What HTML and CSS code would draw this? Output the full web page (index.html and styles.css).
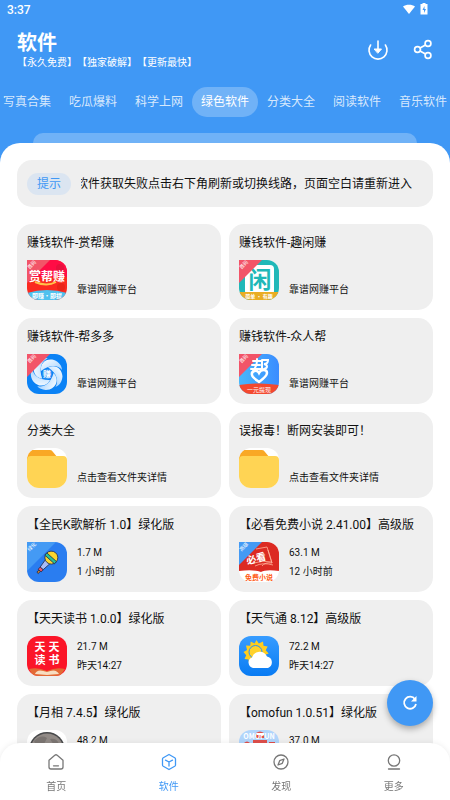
FILE: index.html
```html
<!DOCTYPE html>
<html lang="zh-CN">
<head>
    <meta charset="UTF-8">
    <meta name="viewport" content="width=device-width, initial-scale=1.0">
    <title>软件</title>
    <link rel="stylesheet" href="styles.css">
</head>
<body>
    <header class="header">
        <div class="status">
            <span>3:37</span>
            <svg class="status-icons" width="26" height="14" viewBox="0 0 26 14" fill="#fff">
                <path d="M1 3.500C4 1 10 1 13 3.500L7 11z"/>
                <path d="M18.500 1h2V0h3v1h2v10.500h-7z"/>
                <path d="M22.500 3l-2 4h1.500v3l2-4h-1.500z" fill="#4098f5"/>
            </svg>
        </div>
        <div class="title-row">
            <div>
                <h1 class="title">软件</h1>
                <p class="subtitle">【永久免费】【独家破解】【更新最快】</p>
            </div>
            <div class="actions">
                <button class="icon-button" aria-label="下载">
                    <svg width="24" height="24" viewBox="0 0 24 24" fill="none" stroke="#fff" stroke-width="1.600" stroke-linecap="round">
                        <path d="M4.600 7a9 9 0 1 0 14.800 0M12 3v8"/>
                        <path d="M8.500 11h7L12 15z" fill="#fff" stroke-width="1"/>
                    </svg>
                </button>
                <button class="icon-button" aria-label="分享">
                    <svg width="24" height="24" viewBox="0 0 24 24" fill="none" stroke="#fff" stroke-width="1.700">
                        <circle cx="6.500" cy="11.500" r="2.900"/>
                        <circle cx="17" cy="5.500" r="2.900"/>
                        <circle cx="17" cy="17.500" r="2.900"/>
                        <path d="M9 10l5.500-3.100M9 13l5.500 3.100"/>
                    </svg>
                </button>
            </div>
        </div>
        <nav class="tabs">
            <a class="tab" href="#">写真合集</a>
            <a class="tab" href="#">吃瓜爆料</a>
            <a class="tab" href="#">科学上网</a>
            <a class="tab active" href="#">绿色软件</a>
            <a class="tab" href="#">分类大全</a>
            <a class="tab" href="#">阅读软件</a>
            <a class="tab" href="#">音乐软件</a>
        </nav>
        <div class="peek"></div>
    </header>

    <main class="sheet">
        <div class="notice">
            <span class="notice-tag">提示</span>
            <div class="notice-window"><span class="notice-text">软件获取失败点击右下角刷新或切换线路，页面空白请重新进入</span></div>
        </div>

        <div class="grid">
            <article class="card">
                <h2 class="card-title">赚钱软件-赏帮赚</h2>
                <div class="card-body">
                    <svg class="app-icon ribboned" viewBox="0 0 40 40">
                        <rect width="40" height="40" fill="#fb2a20"/>
                        <rect width="40" height="17" fill="#ff0c45"/>
                        <circle cx="33" cy="8" r="4" fill="#e8103d"/>
                        <circle cx="34" cy="27" r="4" fill="#ea2519"/>
                        <path d="M8 22q12 5 21 0" fill="none" stroke="#ffc34a" stroke-width="2"/>
                        <path d="M0 0h23L0 23z" fill="#f25468"/>
                        <text class="art bold" x="20" y="21" font-size="12" fill="#fff">赏帮赚</text>
                        <path d="M0 33q20-6 40 0v7H0z" fill="#4fc1ee"/>
                        <text class="art bold" x="20" y="38" font-size="6" fill="#fff">即赚·即提</text>
                        <text class="art" x="6" y="6" font-size="5" fill="#fff" transform="rotate(-45 6 6)">首码</text>
                    </svg>
                    <div class="card-info"><p>靠谱网赚平台</p></div>
                </div>
            </article>

            <article class="card">
                <h2 class="card-title">赚钱软件-趣闲赚</h2>
                <div class="card-body">
                    <svg class="app-icon ribboned" viewBox="0 0 40 40">
                        <rect width="40" height="40" fill="#20b8b8"/>
                        <rect x="6" y="5" width="29" height="30" rx="4" fill="#fff"/>
                        <text class="art bold" x="21" y="28" font-size="23" fill="#20b8b8">闲</text>
                        <path d="M0 32h40v8H0z" fill="#e9ad22"/>
                        <text class="art bold" x="20" y="38" font-size="5" fill="#fff">简单 · 有趣</text>
                        <path d="M0 0h23L0 23z" fill="#f25468"/>
                        <text class="art" x="6" y="6" font-size="5" fill="#fff" transform="rotate(-45 6 6)">首码</text>
                    </svg>
                    <div class="card-info"><p>靠谱网赚平台</p></div>
                </div>
            </article>

            <article class="card">
                <h2 class="card-title">赚钱软件-帮多多</h2>
                <div class="card-body">
                    <svg class="app-icon ribboned" viewBox="0 0 40 40">
                        <defs>
                            <linearGradient id="blade" x1="0" y1="0" x2="1" y2="1">
                                <stop offset="0" stop-color="#fff"/>
                                <stop offset="1" stop-color="#9fd0ff"/>
                            </linearGradient>
                        </defs>
                        <rect width="40" height="40" fill="#0b82f5"/>
                        <g fill="url(#blade)">
                            <path id="fan" d="M14 17C13 9 19 4 27 6c5 2 8 6 8 10-4-5-12-6-21 1z"/>
                            <use href="#fan" transform="rotate(72 20 20)"/>
                            <use href="#fan" transform="rotate(144 20 20)"/>
                            <use href="#fan" transform="rotate(216 20 20)"/>
                            <use href="#fan" transform="rotate(288 20 20)"/>
                        </g>
                        <circle cx="20" cy="20" r="5" fill="#2f92f2"/>
                        <text class="art bold" x="20" y="23" font-size="8" fill="#fff">赚</text>
                        <path d="M0 0h23L0 23z" fill="#f25468"/>
                        <text class="art" x="6" y="6" font-size="5" fill="#fff" transform="rotate(-45 6 6)">首码</text>
                    </svg>
                    <div class="card-info"><p>靠谱网赚平台</p></div>
                </div>
            </article>

            <article class="card">
                <h2 class="card-title">赚钱软件-众人帮</h2>
                <div class="card-body">
                    <svg class="app-icon ribboned" viewBox="0 0 40 40">
                        <defs>
                            <linearGradient id="sky" x1="0" y1="0" x2="1" y2="0">
                                <stop offset="0" stop-color="#48b8fb"/>
                                <stop offset="1" stop-color="#3a8cff"/>
                            </linearGradient>
                        </defs>
                        <rect width="40" height="40" fill="url(#sky)"/>
                        <path d="M0 0h23L0 23z" fill="#f25468"/>
                        <path d="M14 7h8M13 11h8M12 15h10M18 5c0 6-1 9-4 11M23 6v10M23 6h6c0 3-1 4-4 4 4 1 4 4 0 5" fill="none" stroke="#fff" stroke-width="2" stroke-linecap="round"/>
                        <path d="M20 19c-2-4-8-2-7 2 0 2 3 4 7 7 4-3 8-6 8-9 0-4-6-4-8 0z" fill="none" stroke="#fff" stroke-width="2.500"/>
                        <path d="M0 31q20-3 40 0v9H0z" fill="#f4492f"/>
                        <text class="art" x="20" y="38" font-size="6" fill="#fff">一元提现</text>
                        <text class="art" x="6" y="6" font-size="5" fill="#fff" transform="rotate(-45 6 6)">首码</text>
                    </svg>
                    <div class="card-info"><p>靠谱网赚平台</p></div>
                </div>
            </article>

            <article class="card">
                <h2 class="card-title">分类大全</h2>
                <div class="card-body">
                    <svg class="app-icon" viewBox="0 0 40 40">
                        <rect width="40" height="40" fill="#fff"/>
                        <path d="M0 2h23q2 0 3 2l5 6v8H0z" fill="#f9a825"/>
                        <path d="M0 12q0-4 4-4h32q4 0 4 4v28H0z" fill="#ffd454"/>
                    </svg>
                    <div class="card-info"><p>点击查看文件夹详情</p></div>
                </div>
            </article>

            <article class="card">
                <h2 class="card-title">误报毒！断网安装即可！</h2>
                <div class="card-body">
                    <svg class="app-icon" viewBox="0 0 40 40">
                        <rect width="40" height="40" fill="#fff"/>
                        <path d="M0 2h23q2 0 3 2l5 6v8H0z" fill="#f9a825"/>
                        <path d="M0 12q0-4 4-4h32q4 0 4 4v28H0z" fill="#ffd454"/>
                    </svg>
                    <div class="card-info"><p>点击查看文件夹详情</p></div>
                </div>
            </article>

            <article class="card">
                <h2 class="card-title">【全民K歌解析 1.0】绿化版</h2>
                <div class="card-body">
                    <svg class="app-icon ribboned" viewBox="0 0 40 40">
                        <rect width="40" height="40" fill="#2a7df0"/>
                        <path d="M0 0h29L0 29z" fill="#449af4"/>
                        <g transform="rotate(42 24 16)" stroke="#26324f" stroke-width=".8">
                            <path d="M21 21h6l-1 9h-4z" fill="#a9bcf8"/>
                            <path d="M22 30h4v3h-4z" fill="#f0566c"/>
                            <path d="M23 33h2v3h-2z" fill="#c97d32"/>
                            <circle cx="24" cy="15.500" r="6.500" fill="#fcd52c"/>
                            <path d="M17.500 15h13v3h-13z" fill="#27c297"/>
                        </g>
                        <text class="art" x="6" y="6" font-size="5" fill="#fff" transform="rotate(-45 6 6)">绿化</text>
                    </svg>
                    <div class="card-info"><p>1.7 M</p><p>1 小时前</p></div>
                </div>
            </article>

            <article class="card">
                <h2 class="card-title">【必看免费小说 2.41.00】高级版</h2>
                <div class="card-body">
                    <svg class="app-icon ribboned" viewBox="0 0 40 40">
                        <rect width="40" height="40" fill="#fff"/>
                        <path d="M0 0h40v29q-13-2-18 1-8-3-22-1z" fill="#dc2a22"/>
                        <path d="M17 7l11-2 5 16q-7-1-10 3M29 8l4 13M16 24q8-4 18-1M15 21q8-3 18-1" fill="none" stroke="#ffb39a" stroke-width=".8"/>
                        <path d="M0 0h23L0 23z" fill="#449af4"/>
                        <text class="art bold" x="18" y="20" font-size="10" fill="#fff" transform="rotate(-14 18 20)">必看</text>
                        <text class="art bold" x="20" y="38" font-size="7" fill="#ff5a14">免费小说</text>
                        <text class="art" x="6" y="6" font-size="5" fill="#fff" transform="rotate(-45 6 6)">高级</text>
                    </svg>
                    <div class="card-info"><p>63.1 M</p><p>12 小时前</p></div>
                </div>
            </article>

            <article class="card">
                <h2 class="card-title">【天天读书 1.0.0】绿化版</h2>
                <div class="card-body">
                    <svg class="app-icon" viewBox="0 0 40 40">
                        <rect width="40" height="40" fill="#fb1528"/>
                        <text class="art bold" x="13" y="15" font-size="11" fill="#fff">天</text>
                        <text class="art bold" x="27" y="15" font-size="11" fill="#fff">天</text>
                        <text class="art bold" x="13" y="28" font-size="11" fill="#fff">读</text>
                        <text class="art bold" x="27" y="28" font-size="11" fill="#fff">书</text>
                        <path d="M2 33q9-2 18 2 9-4 18-2l-5 7H6z" fill="#e36a35"/>
                        <path d="M8 38q2-6 12-2 9-4 12 2l-12 1z" fill="#f7ddc0"/>
                    </svg>
                    <div class="card-info"><p>21.7 M</p><p>昨天14:27</p></div>
                </div>
            </article>

            <article class="card">
                <h2 class="card-title">【天气通 8.12】高级版</h2>
                <div class="card-body">
                    <svg class="app-icon" viewBox="0 0 40 40">
                        <defs>
                            <linearGradient id="weather" x1="0" y1="0" x2="0" y2="1">
                                <stop offset="0" stop-color="#379cff"/>
                                <stop offset="1" stop-color="#087bf3"/>
                            </linearGradient>
                        </defs>
                        <rect width="40" height="40" fill="url(#weather)"/>
                        <path d="M16.500 4l2.300 3.500L23 5.500l.5 4.200 4.200.8-2 3.700 3 3.300-4 1.500L9 27l-.5-3.500-4-.5 1.700-3.700L3.500 16 7 14l-1-4.500 4.200.3.500-4.300 3.800 2z" transform="translate(1 0)" fill="#ffcd1c"/>
                        <circle cx="16.500" cy="16" r="6.500" fill="#ffd22b" stroke="#2790fb" stroke-width="1"/>
                        <path d="M14 32a5.500 5.500 0 0 1-1-10.500 8 8 0 0 1 15-1A6 6 0 0 1 29 32z" fill="#fff"/>
                    </svg>
                    <div class="card-info"><p>72.2 M</p><p>昨天14:27</p></div>
                </div>
            </article>

            <article class="card">
                <h2 class="card-title">【月相 7.4.5】绿化版</h2>
                <div class="card-body">
                    <svg class="app-icon" viewBox="0 0 40 40">
                        <rect width="40" height="40" fill="#fff"/>
                        <circle cx="20" cy="20" r="18" fill="#47484a"/>
                        <circle cx="20" cy="20" r="16.500" fill="#928b87"/>
                        <path d="M7 11q7-7 13-3l-3 6q-8 3-10-3zM23 9q7-1 9 5l-5 1z" fill="#7b7572"/>
                    </svg>
                    <div class="card-info"><p>48.2 M</p><p>昨天14:27</p></div>
                </div>
            </article>

            <article class="card">
                <h2 class="card-title">【omofun 1.0.51】绿化版</h2>
                <div class="card-body">
                    <svg class="app-icon" viewBox="0 0 40 40">
                        <rect width="40" height="40" fill="#b1d5fb"/>
                        <path d="M17 3q4-3 8 0v5h-8zM14 10h14v8H14zM5 13q3-3 6 0v7H5zM30 12h6v8h-6z" fill="#df4f4b"/>
                        <path d="M18 3h7v2h-7z" fill="#fff"/>
                        <text class="art bold" x="20" y="9" font-size="7" fill="#fff">OMOFUN</text>
                    </svg>
                    <div class="card-info"><p>37.0 M</p><p>昨天14:27</p></div>
                </div>
            </article>
        </div>
    </main>

    <button class="fab" aria-label="刷新">
        <svg width="20" height="20" viewBox="0 0 20 20" fill="none" stroke="#fff" stroke-width="1.800">
            <path d="M15 6.200A6 6 0 1 0 16 11"/>
            <path d="M16.500 3v5.500H11z" fill="#fff" stroke="none"/>
        </svg>
    </button>

    <nav class="bottom-nav">
        <a class="nav-item" href="#">
            <svg width="20" height="20" viewBox="0 0 20 20">
                <path d="M3 8.200L8.800 3.200q1.200-.9 2.400 0L17 8.200V15q0 2-2 2H5q-2 0-2-2zM7.500 13.800h5"/>
            </svg>
            <span>首页</span>
        </a>
        <a class="nav-item active" href="#">
            <svg width="20" height="20" viewBox="0 0 20 20">
                <path d="M10 2.500l5.700 3.200q.8.500.8 1.400v5.800q0 .9-.8 1.400L10 17.500l-5.700-3.200q-.8-.5-.8-1.400V7.100q0-.9.800-1.400zM6.500 8.200L10 10l3.500-1.800M10 10v4"/>
            </svg>
            <span>软件</span>
        </a>
        <a class="nav-item" href="#">
            <svg width="20" height="20" viewBox="0 0 20 20">
                <circle cx="10" cy="10" r="7"/>
                <path d="M13 7l-1.700 4.300L7 13l1.700-4.300z"/>
            </svg>
            <span>发现</span>
        </a>
        <a class="nav-item" href="#">
            <svg width="20" height="20" viewBox="0 0 20 20">
                <circle cx="10" cy="8.500" r="5.700"/>
                <path d="M4.500 17h11"/>
            </svg>
            <span>更多</span>
        </a>
    </nav>
</body>
</html>
```
FILE: styles.css
```css
* {
    box-sizing: border-box;
}
body {
    margin: 0;
    height: 100vh;
    display: flex;
    flex-direction: column;
    overflow: hidden;
    background-color: #4098f5;
    color: #111;
    font-family: Roboto, "Noto Sans CJK SC", sans-serif;
    text-spacing-trim: space-all;
}
h1, h2, p {
    margin: 0;
}
a {
    text-decoration: none;
}
button {
    padding: 0;
    border: none;
    background: none;
    cursor: pointer;
}
svg {
    display: block;
}

/* header */
.header {
    flex: none;
    color: #fff;
}
.status {
    display: flex;
    justify-content: space-between;
    align-items: center;
    height: 20px;
    padding: 0 22px 0 7px;
    font-size: 12px;
    font-weight: 500;
}
.title-row {
    display: flex;
    justify-content: space-between;
    align-items: center;
    padding: 10px 15px 0 17px;
}
.title {
    font-size: 20px;
    font-weight: 700;
    line-height: 26px;
}
.subtitle {
    font-size: 10px;
    line-height: 14px;
}
.actions {
    display: flex;
    gap: 21px;
}
.tabs {
    display: flex;
    justify-content: center;
    margin-top: 17px;
    overflow: hidden;
}
.tab {
    flex: none;
    padding: 0 9px;
    border-radius: 15px;
    color: rgba(255,255,255,0.8);
    font-size: 12px;
    line-height: 30px;
}
.tab.active {
    background: rgba(255,255,255,0.25);
    color: #fff;
}
.peek {
    height: 10px;
    margin: 16px 33px 0;
    border-radius: 10px 10px 0 0;
    background: rgba(255,255,255,0.25);
}

/* content */
.sheet {
    flex: 1;
    min-height: 0;
    margin-bottom: -20px;
    padding: 17px 17px 0;
    overflow: hidden;
    border-radius: 20px 20px 0 0;
    background: #fff;
}
.notice {
    display: flex;
    align-items: center;
    gap: 10px;
    height: 47px;
    padding: 0 10px;
    border-radius: 15px;
    background: #efefef;
}
.notice-tag {
    flex: none;
    padding: 0 10px;
    border-radius: 11px;
    background: #dbe5f1;
    color: #4098f5;
    font-size: 12px;
    line-height: 22px;
}
.notice-window {
    flex: 1;
    overflow: hidden;
    white-space: nowrap;
    font-size: 12px;
    line-height: 22px;
}
.notice-text {
    margin-left: -5px;
}
.grid {
    display: grid;
    grid-template-columns: 1fr 1fr;
    gap: 8px;
    margin-top: 17px;
}
.card {
    min-width: 0;
    padding: 10px;
    border-radius: 15px;
    background: #efefef;
}
.card-title {
    overflow: hidden;
    white-space: nowrap;
    font-size: 12px;
    font-weight: 400;
    line-height: 18px;
}
.card-body {
    display: flex;
    gap: 10px;
    margin-top: 8px;
}
.app-icon {
    flex: none;
    width: 40px;
    height: 40px;
    border-radius: 12px;
}
.ribboned {
    border-top-left-radius: 0;
}
.art {
    font-family: "Noto Sans CJK SC", sans-serif;
    text-anchor: middle;
}
.bold {
    font-weight: 700;
}
.card-info {
    display: flex;
    flex-direction: column;
    justify-content: flex-end;
    padding-bottom: 1px;
    font-size: 10px;
    line-height: 19px;
}

/* refresh button */
.fab {
    position: fixed;
    right: 17px;
    bottom: 74px;
    display: flex;
    justify-content: center;
    align-items: center;
    width: 46px;
    height: 46px;
    border-radius: 50%;
    background: #4098f5;
    box-shadow: 0 3px 6px rgba(0,0,0,0.3);
}

/* bottom navigation */
.bottom-nav {
    position: relative;
    flex: none;
    display: flex;
    height: 57px;
    padding-top: 9px;
    border-radius: 20px 20px 0 0;
    background: #fff;
    box-shadow: 0 0 6px rgba(0,0,0,0.08);
}
.nav-item {
    flex: 1;
    display: flex;
    flex-direction: column;
    align-items: center;
    gap: 7px;
    color: #777;
    font-size: 10px;
    line-height: 16px;
}
.nav-item.active {
    color: #4098f5;
}
.nav-item svg {
    fill: none;
    stroke: currentColor;
    stroke-width: 1.3;
    stroke-linecap: round;
    stroke-linejoin: round;
}
```
